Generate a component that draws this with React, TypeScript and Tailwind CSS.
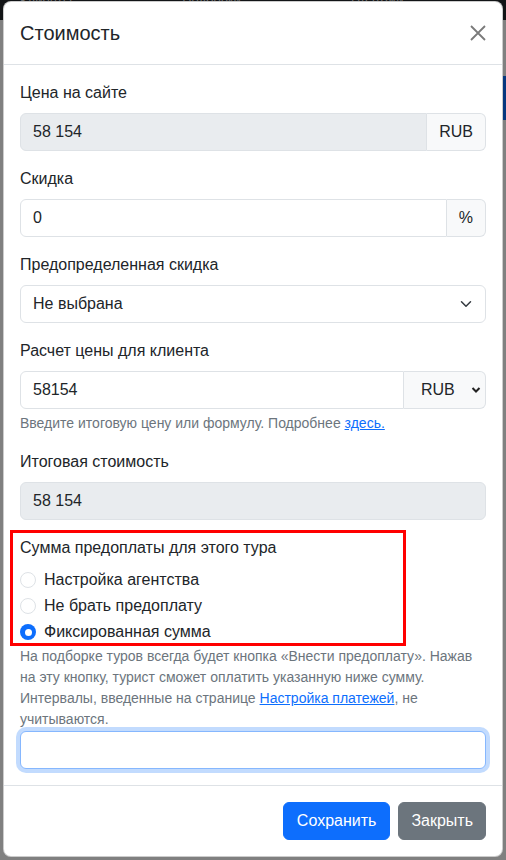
import React from "react";

function Chevron({ className }: { className?: string }) {
  return (
    <svg width="16" height="12" viewBox="0 0 16 16" className={className} fill="none">
      <path d="m2 5 6 6 6-6" stroke="#343a40" strokeWidth="2" strokeLinecap="round" strokeLinejoin="round" />
    </svg>
  );
}

function Radio({ checked, label }: { checked?: boolean; label: string }) {
  return (
    <div className="flex h-6 items-center gap-2 mb-[2px]">
      {checked ? (
        <span className="flex h-4 w-4 items-center justify-center rounded-full bg-[#0d6efd]">
          <span className="h-[7px] w-[7px] rounded-full bg-white" />
        </span>
      ) : (
        <span className="h-4 w-4 rounded-full border border-[#dee2e6] bg-white" />
      )}
      <span>{label}</span>
    </div>
  );
}

export default function App() {
  return (
    <div className="relative h-[860px] w-[506px] overflow-hidden bg-[#808080] font-[family-name:'Liberation_Sans',Arial,sans-serif] text-[16px] leading-6 text-[#212529]">
      {/* background page */}
      <div className="flex h-[20px] items-start gap-[110px] bg-[#121416] px-[20px] text-[13px] leading-[6px] text-[#6a6a6a] overflow-hidden">
        <span className="-mt-[2px]">Клиенты</span>
        <span className="-mt-[2px]">Подборки</span>
        <span className="-mt-[2px]">Платежи</span>
        <span className="-mt-[2px]">ТО и пароли</span>
      </div>
      <div className="mt-[56px] flex justify-end">
        <div className="h-[44px] w-[40px] bg-[#07377f]" />
      </div>

      {/* modal */}
      <div className="absolute left-[3px] top-[1px] w-[500px] rounded-[8px] border border-black/20 bg-white">
        <div className="flex items-center justify-between border-b border-[#dee2e6] p-4">
          <h5 className="text-[20px] leading-[30px] font-normal">Стоимость</h5>
          <svg width="16" height="16" viewBox="0 0 16 16" className="mr-0">
            <path d="M1 1 15 15M15 1 1 15" stroke="#7a7a7a" strokeWidth="1.8" />
          </svg>
        </div>

        <div className="p-4">
          <div className="mb-4">
            <label className="mb-2 block">Цена на сайте</label>
            <div className="flex h-[38px]">
              <div className="flex flex-1 items-center rounded-l-[6px] border border-[#dee2e6] bg-[#e9ecef] px-3">58 154</div>
              <div className="flex items-center rounded-r-[6px] border border-l-0 border-[#dee2e6] bg-[#f8f9fa] px-3">RUB</div>
            </div>
          </div>

          <div className="mb-4">
            <label className="mb-2 block">Скидка</label>
            <div className="flex h-[38px]">
              <div className="flex flex-1 items-center rounded-l-[6px] border border-[#dee2e6] bg-white px-3">0</div>
              <div className="flex items-center rounded-r-[6px] border border-l-0 border-[#dee2e6] bg-[#f8f9fa] px-3">%</div>
            </div>
          </div>

          <div className="mb-4">
            <label className="mb-2 block">Предопределенная скидка</label>
            <div className="flex h-[38px] items-center justify-between rounded-[6px] border border-[#dee2e6] bg-white pl-3 pr-[11px]">
              <span>Не выбрана</span>
              <Chevron />
            </div>
          </div>

          <div className="mb-4">
            <label className="mb-2 block">Расчет цены для клиента</label>
            <div className="flex h-[38px]">
              <div className="flex flex-1 items-center rounded-l-[6px] border border-[#dee2e6] bg-white px-3">58154</div>
              <div className="flex w-[82px] items-center justify-between rounded-r-[6px] border border-l-0 border-[#dee2e6] bg-[#f8f9fa] pl-[17px] pr-[4px]">
                <span>RUB</span>
                <svg width="10" height="8" viewBox="0 0 10 8" fill="none">
                  <path d="M1.5 2 5 5.5 8.5 2" stroke="#222" strokeWidth="2" />
                </svg>
              </div>
            </div>
            <div className="mt-1 text-[14px] leading-[21px] text-[#6c757d]">
              Введите итоговую цену или формулу. Подробнее{" "}
              <a className="text-[#0d6efd] underline">здесь.</a>
            </div>
          </div>

          <div className="mb-4">
            <label className="mb-2 block">Итоговая стоимость</label>
            <div className="flex h-[38px] items-center rounded-[6px] border border-[#dee2e6] bg-[#e9ecef] px-3">58 154</div>
          </div>

          <div className="relative">
            <div className="absolute left-[-10px] top-[-6px] h-[116px] w-[396px] border-[3px] border-[#ff0000]" />
            <label className="mb-2 block">Сумма предоплаты для этого тура</label>
            <Radio label="Настройка агентства" />
            <Radio label="Не брать предоплату" />
            <Radio checked label="Фиксированная сумма" />
            <div className="mt-[1px] text-[14px] leading-[21px] text-[#6c757d]">
              На подборке туров всегда будет кнопка «Внести предоплату». Нажав на эту кнопку, турист сможет оплатить указанную ниже сумму. Интервалы, введенные на странице{" "}
              <a className="text-[#0d6efd] underline">Настройка платежей</a>, не учитываются.
            </div>
            <div className="mt-[1px] h-[38px] rounded-[6px] border border-[#86b7fe] bg-white shadow-[0_0_0_4px_rgba(13,110,253,0.25)]" />
          </div>
        </div>

        <div className="flex justify-end gap-2 border-t border-[#dee2e6] p-4">
          <button className="h-[38px] rounded-[6px] border border-[#0d6efd] bg-[#0d6efd] px-[13px] text-white">Сохранить</button>
          <button className="h-[38px] rounded-[6px] border border-[#6c757d] bg-[#6c757d] px-3 text-white">Закрыть</button>
        </div>
      </div>
    </div>
  );
}
